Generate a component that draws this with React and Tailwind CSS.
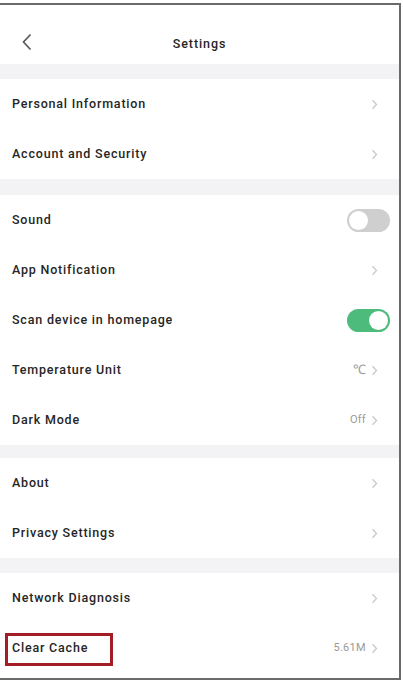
import React from "react";

const font = { fontFamily: 'Roboto, "Liberation Sans", Arial, sans-serif' };

function Chevron() {
  return (
    <svg width="7" height="11" viewBox="0 0 7 11" className="ml-[5px]">
      <path d="M1.5 1.2 L5.5 5.5 L1.5 9.8" fill="none" stroke="#c9c9c9" strokeWidth="1.3" />
    </svg>
  );
}

function Toggle({ on }) {
  return (
    <div
      className={`w-[43px] h-[23px] rounded-full flex items-center px-[2px] ${on ? "bg-[#4dbb7b] justify-end" : "bg-[#cfcfcf] justify-start"}`}
    >
      <div className="w-[19px] h-[19px] rounded-full bg-white" />
    </div>
  );
}

function Row({ label, value, valueClass, toggle, boxed }) {
  return (
    <div className="h-[50px] flex items-center justify-between pl-[12px] pr-[21px] relative">
      <span className="text-[12.5px] font-medium text-[#262626] tracking-[0.8px]">{label}</span>
      {boxed && (
        <div className="absolute left-[5px] top-[10px] w-[108px] h-[33px] border-[3px] border-[#a31d25]" />
      )}
      <div className="flex items-center">
        {toggle !== undefined ? (
          <div className="mr-[-12px]"><Toggle on={toggle} /></div>
        ) : (
          <>
            {value && <span className={`text-[#9a9a9a] tracking-[0.3px] ${valueClass || "text-[11px]"}`}>{value}</span>}
            <Chevron />
          </>
        )}
      </div>
    </div>
  );
}

function Band({ h }) {
  return <div className="bg-[#f3f2f5]" style={{ height: h }} />;
}

export default function App() {
  return (
    <div className="w-[403px] h-[681px] bg-white" style={font}>
      <div className="w-[401px] mt-[3px] h-[677px] border-t-2 border-r-2 border-b-2 border-[#6a6a6a] flex flex-col">
        <div className="h-[59px] flex items-center justify-center relative pt-[19px]">
          <svg width="12" height="18" viewBox="0 0 12 18" className="absolute left-[21px] top-[28px]">
            <path d="M9.5 1.5 L2.5 9 L9.5 16.5" fill="none" stroke="#555" strokeWidth="1.6" />
          </svg>
          <span className="text-[12.5px] font-medium text-[#262626] tracking-[0.9px]">Settings</span>
        </div>
        <Band h={15} />
        <Row label="Personal Information" />
        <Row label="Account and Security" />
        <Band h={16} />
        <Row label="Sound" toggle={false} />
        <Row label="App Notification" />
        <Row label="Scan device in homepage" toggle={true} />
        <Row label="Temperature Unit" value="℃" valueClass="text-[13px]" />
        <Row label="Dark Mode" value="Off" />
        <Band h={13} />
        <Row label="About" />
        <Row label="Privacy Settings" />
        <Band h={15} />
        <Row label="Network Diagnosis" />
        <Row label="Clear Cache" value="5.61M" boxed />
        <div className="flex-1" />
      </div>
    </div>
  );
}
